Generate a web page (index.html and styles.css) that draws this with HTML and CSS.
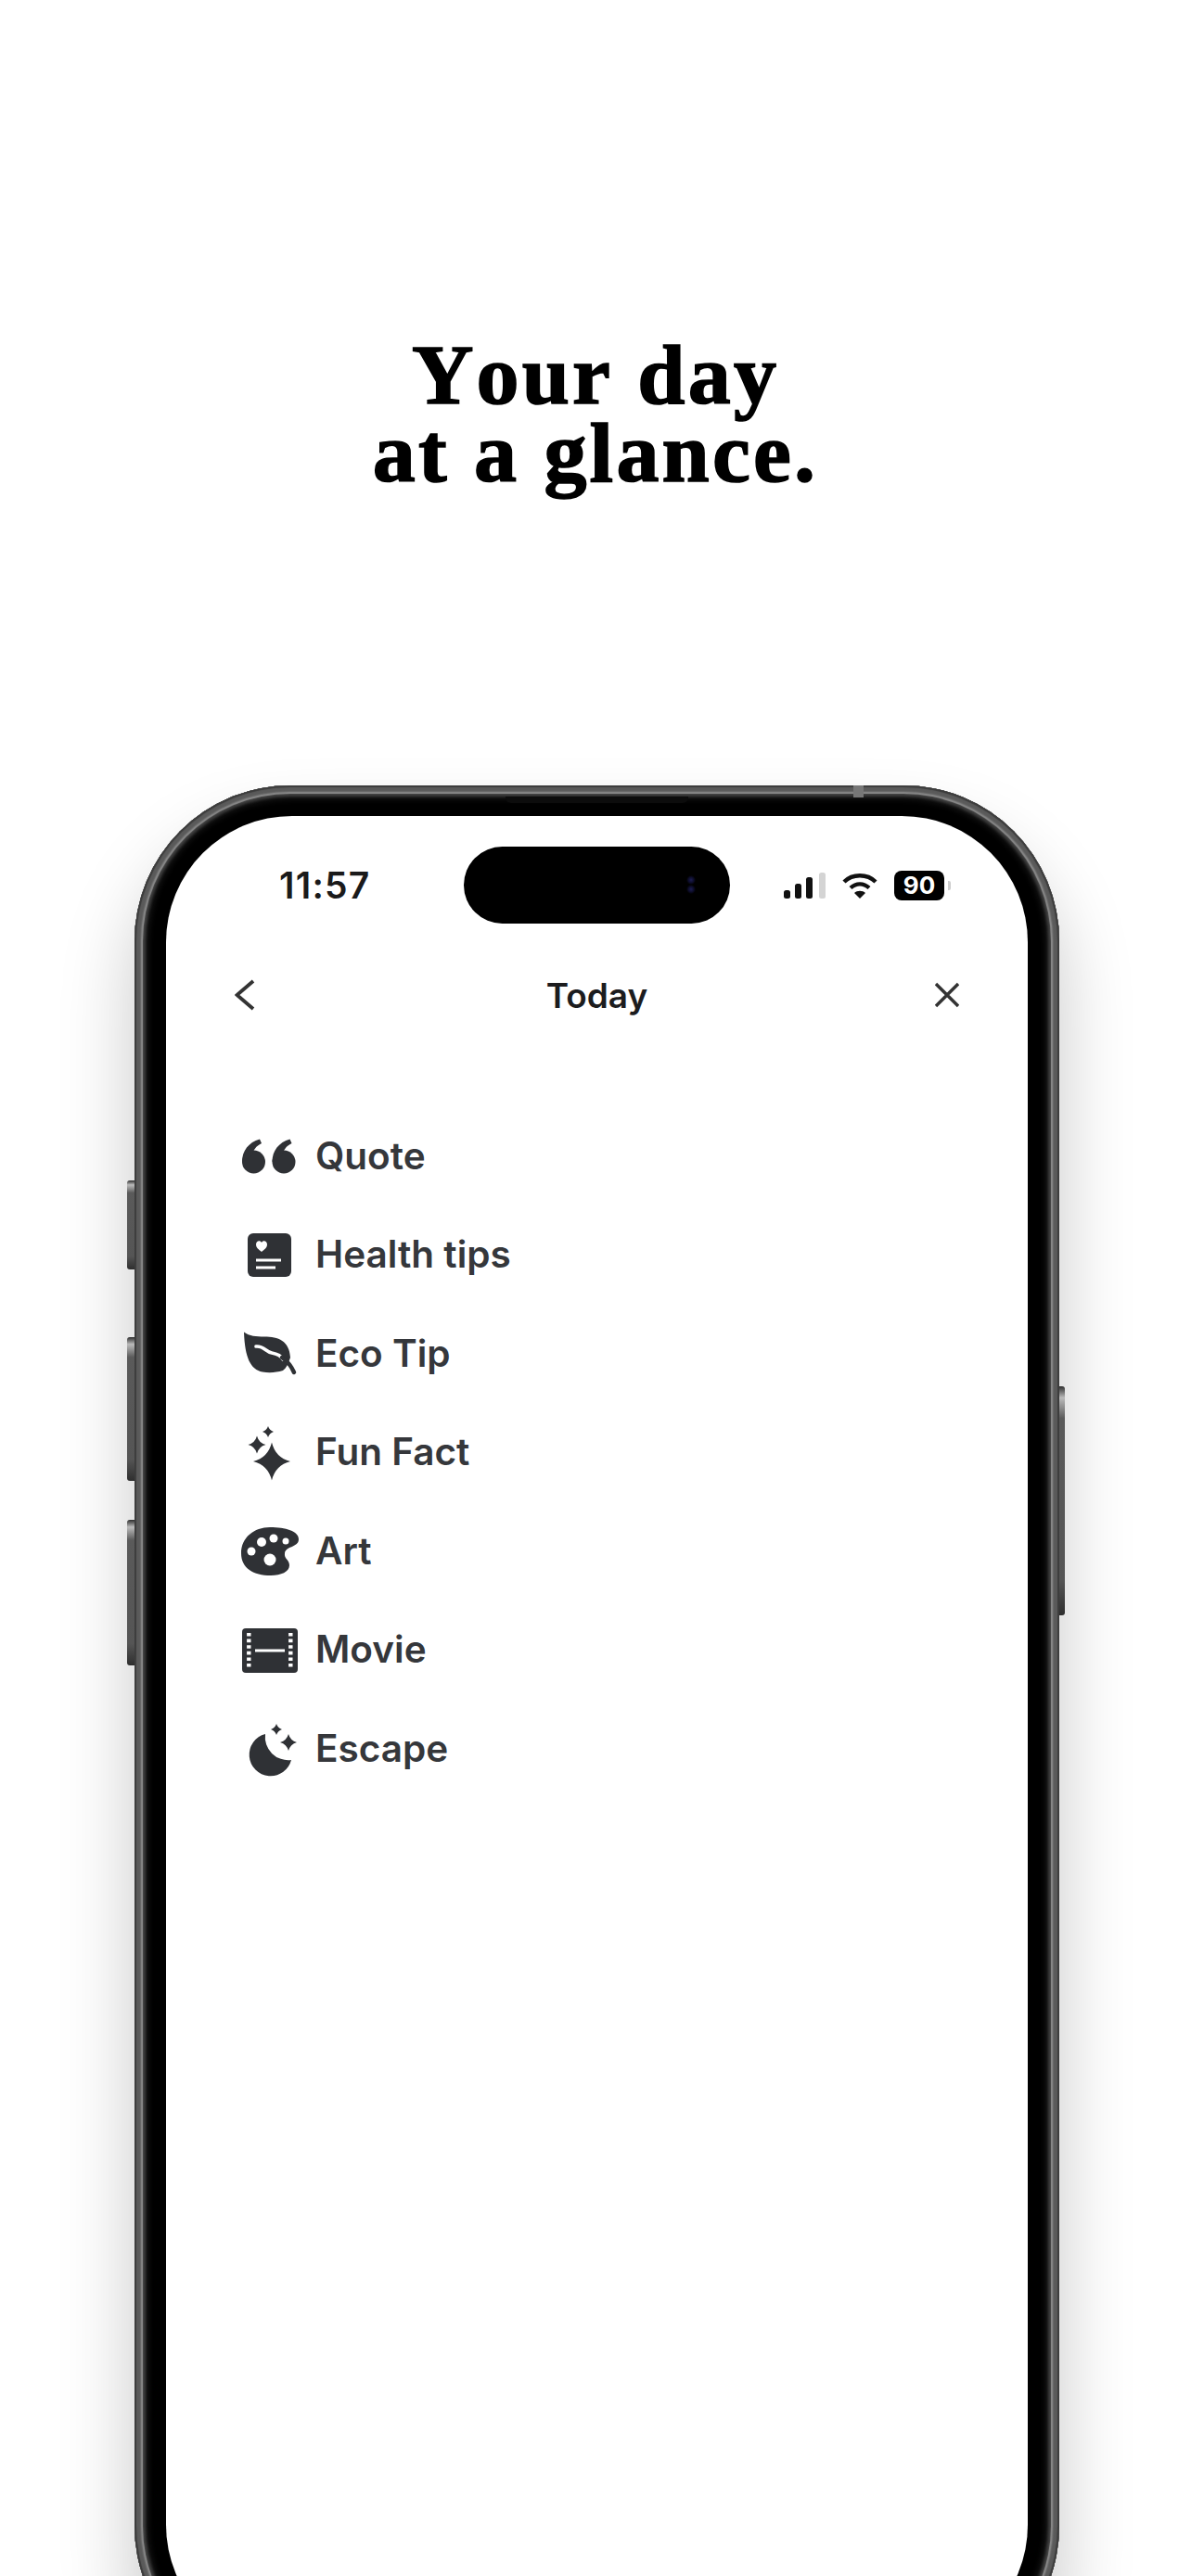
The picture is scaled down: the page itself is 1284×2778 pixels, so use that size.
FILE: index.html
```html
<!DOCTYPE html>
<html lang="en">

<head>
    <meta charset="UTF-8">
    <meta name="viewport" content="width=device-width, initial-scale=1.0">
    <title>Your day at a glance</title>
    <link rel="stylesheet" href="styles.css">
</head>

<body>
    <h1 class="headline">Your day<br>at a glance.</h1>

    <div class="phone">
        <span class="side-btn btn-action"></span>
        <span class="side-btn btn-vol-up"></span>
        <span class="side-btn btn-vol-down"></span>
        <span class="side-btn btn-power"></span>
        <span class="speaker"></span>
        <span class="seam"></span>

        <div class="screen">
            <div class="status-bar">
                <div class="status-time">11:57</div>
                <div class="island"><span class="camera"></span></div>
                <div class="status-icons">
                    <svg class="signal" width="45" height="28" viewBox="0 0 45 28">
                        <rect x="0" y="19" width="7" height="9" rx="2.5" fill="#111"/>
                        <rect x="12" y="12" width="7" height="16" rx="2.5" fill="#111"/>
                        <rect x="24" y="5" width="7" height="23" rx="2.5" fill="#111"/>
                        <rect x="38" y="0" width="7" height="28" rx="2.5" fill="#d4d4d4"/>
                    </svg>
                    <svg class="wifi" width="38" height="28" viewBox="0 0 38 28">
                        <path d="M2 10C11 1 27 1 36 10" fill="none" stroke="#111" stroke-width="4.4"/>
                        <path d="M9 16.5C15 11 23 11 29 16.5" fill="none" stroke="#111" stroke-width="4.4"/>
                        <path d="M13 22C16 19 22 19 25 22L19 28Z" fill="#111"/>
                    </svg>
                    <div class="battery">90</div>
                    <span class="battery-nub"></span>
                </div>
            </div>

            <div class="nav-bar">
                <svg width="26" height="34" viewBox="0 0 26 34">
                    <path d="M20 2L2.5 17L20 32" fill="none" stroke="#333" stroke-width="3.8"/>
                </svg>
                <div class="nav-title">Today</div>
                <svg width="26" height="34" viewBox="0 0 26 34">
                    <path d="M1 5L25 29M25 5L1 29" fill="none" stroke="#333" stroke-width="3.4"/>
                </svg>
            </div>

            <div class="topic-list">
                <div class="topic">
                    <svg class="topic-icon" viewBox="0 0 66 66">
                        <circle cx="15.5" cy="40" r="12.5"/>
                        <circle cx="48" cy="40" r="12.5"/>
                        <path d="M3 40C3 28 10 19 22 15.5L24 20C18 23 15 27 14 33Z"/>
                        <path d="M35.5 40C35.5 28 42.5 19 54.5 15.5L56.5 20C50.5 23 47.5 27 46.5 33Z"/>
                    </svg>
                    <span>Quote</span>
                </div>
                <div class="topic">
                    <svg class="topic-icon" viewBox="0 0 66 66">
                        <rect x="9" y="10" width="47" height="47" rx="6"/>
                        <path class="cut" d="M24 30C21 27.500 18 25.500 18 22C18 18 22.500 17 24 20C25.500 17 30 18 30 22C30 25.500 27 27.500 24 30Z"/>
                        <path class="cut-line" d="M18 39H45M18 47H39"/>
                    </svg>
                    <span>Health tips</span>
                </div>
                <div class="topic">
                    <svg class="topic-icon" viewBox="0 0 66 66">
                        <path d="M5 10.500C11 15 18 15.500 27 15.500C42 15.500 54 20 55 38C53 44 51 49 47 52C40 54 33 55 25 53.500C12 51 6 38 5 10.500Z"/>
                        <path class="cut-line vein" d="M18 26C26 25 29 32 35 33C41 34 45 36 47 40" stroke-linecap="round"/>
                        <path d="M46 38C52 42 56 47 59 54" fill="none" stroke="#2f3135" stroke-width="4.500" stroke-linecap="round"/>
                    </svg>
                    <span>Eco Tip</span>
                </div>
                <div class="topic">
                    <svg class="topic-icon" viewBox="0 0 66 66">
                        <path d="M35 22.500q4 16.500 20 20.500q-16 4-20 20.500q-4-16.500-20-20.500q16-4 20-20.500z"/>
                        <path d="M19 15.500q2 7.500 9.500 9.500q-7.500 2-9.500 9.500q-2-7.500-9.500-9.500q7.500-2 9.500-9.500z"/>
                        <path d="M31 5q1.500 4.500 6 6q-4.500 1.500-6 6q-1.500-4.500-6-6q4.500-1.500 6-6z"/>
                    </svg>
                    <span>Fun Fact</span>
                </div>
                <div class="topic">
                    <svg class="topic-icon" viewBox="0 0 66 66">
                        <path d="M2 36C2 19 16 8 33 8C50 8 64 12 64 21C64 30 50 28 49 36C48 42 54 43 54 49C54 56 45 60 34 60C15 60 2 52 2 36Z"/>
                        <circle class="cut" cx="24" cy="24" r="5"/>
                        <circle class="cut" cx="37" cy="20" r="4.500"/>
                        <circle class="cut" cx="50" cy="23" r="3.500"/>
                        <circle class="cut" cx="13" cy="34" r="4.500"/>
                        <circle class="cut" cx="33" cy="43" r="6.500"/>
                    </svg>
                    <span>Art</span>
                </div>
                <div class="topic">
                    <svg class="topic-icon" viewBox="0 0 66 66">
                        <rect x="3" y="10" width="60" height="48" rx="4"/>
                        <path class="cut-line" d="M17 34H49"/>
                        <path class="cut-dots" d="M10.300 15V52M55.300 15V52"/>
                    </svg>
                    <span>Movie</span>
                </div>
                <div class="topic">
                    <svg class="topic-icon" viewBox="0 0 66 66">
                        <path d="M28 18A23 23 0 1 0 56 46A25 25 0 0 1 28 18Z"/>
                        <path d="M53 18q2 7 9 9q-7 2-9 9q-2-7-9-9q7-2 9-9z"/>
                        <path d="M40 7q1.500 4.500 6 6q-4.500 1.500-6 6q-1.500-4.500-6-6q4.500-1.500 6-6z"/>
                    </svg>
                    <span>Escape</span>
                </div>
            </div>
        </div>
    </div>
</body>

</html>
```

FILE: styles.css
```css
html,
body {
    height: 2778px;
    overflow: hidden;
}

body {
    margin: 0;
    background-color: #fff;
    font-family: 'Inter', 'Liberation Sans', sans-serif;
}

.headline {
    margin: 0;
    padding-top: 362px;
    text-align: center;
    font-family: 'Liberation Serif', serif;
    font-size: 92px;
    font-weight: bold;
    font-kerning: none;
    line-height: 84px;
    letter-spacing: 3.2px;
    -webkit-text-stroke: 1.6px #000;
    color: #000;
}

.phone {
    position: relative;
    box-sizing: border-box;
    width: 997px;
    height: 2045px;
    margin: 317px 0 0 145px;
    padding: 33px 34px;
    background-color: #000;
    border-radius: 168px;
    box-shadow:
        inset 0 0 1px 2px #3c3c3c,
        inset 0 0 2px 7px #5a5a5a,
        inset 0 0 1px 9px #929292,
        inset 0 0 3px 12px #3e3e3e,
        inset 0 0 6px 15px #161616,
        0 50px 80px rgba(0, 0, 0, 0.22);
}

.side-btn {
    position: absolute;
    width: 8px;
    border-radius: 3px 0 0 3px;
    background: linear-gradient(#2e2e2e 0, #bbb 5%, #5a5a5a 14%, #555 85%, #2e2e2e 100%);
}

.btn-action {
    left: -8px;
    top: 426px;
    height: 96px;
}

.btn-vol-up {
    left: -8px;
    top: 595px;
    height: 155px;
}

.btn-vol-down {
    left: -8px;
    top: 792px;
    height: 157px;
}

.btn-power {
    left: auto;
    right: -6px;
    top: 648px;
    height: 247px;
    width: 6px;
    border-radius: 0 3px 3px 0;
}

.speaker {
    position: absolute;
    left: 400px;
    top: 12px;
    width: 197px;
    height: 7px;
    background-color: #0c0c0c;
    border-radius: 0 0 6px 6px;
}

.seam {
    position: absolute;
    left: 775px;
    top: 0;
    width: 11px;
    height: 13px;
    background-color: #777;
}

.screen {
    height: 100%;
    background-color: #fff;
    border-radius: 136px;
    overflow: hidden;
}

/* status bar */
.status-bar {
    display: grid;
    grid-template-columns: 1fr 287px 1fr;
    align-items: center;
    padding-top: 33px;
}

.status-time {
    padding-left: 122px;
    font-size: 39px;
    font-weight: 560;
    letter-spacing: 1.2px;
    color: #1a1a1a;
}

.island {
    position: relative;
    height: 83px;
    background-color: #000;
    border-radius: 42px;
}

.camera {
    position: absolute;
    right: 37px;
    top: 29px;
    width: 10px;
    height: 24px;
    background:
        radial-gradient(circle at 5px 7px, #1c1c52 0, #0c0c28 3px, transparent 5px),
        radial-gradient(circle at 5px 17px, #1c1c52 0, #0c0c28 3px, transparent 5px);
}

.status-icons {
    display: flex;
    align-items: center;
    gap: 18px;
    padding-left: 58px;
}

.battery {
    width: 54px;
    height: 32px;
    background-color: #000;
    border-radius: 8px;
    text-align: center;
    font-size: 26px;
    font-weight: 700;
    line-height: 32px;
    color: #fff;
}

.battery-nub {
    width: 3px;
    height: 10px;
    margin-left: -14px;
    background-color: #ccc;
    border-radius: 0 2px 2px 0;
}

/* nav */
.nav-bar {
    display: flex;
    justify-content: space-between;
    align-items: center;
    height: 60px;
    margin-top: 47px;
    padding: 0 74px;
}

.nav-title {
    font-size: 37px;
    font-weight: 600;
    color: #1c1c1e;
}

/* list */
.topic-list {
    margin-top: 90px;
    padding-left: 79px;
}

.topic {
    display: flex;
    align-items: center;
    gap: 16px;
    height: 106.5px;
    font-size: 40.5px;
    font-weight: 590;
    color: #35373b;
}

.topic-icon {
    width: 66px;
    height: 66px;
    fill: #2f3135;
}

.cut {
    fill: #fff;
}

.cut-line {
    fill: none;
    stroke: #fff;
    stroke-width: 3;
}

.vein {
    stroke-width: 3.6;
}

.cut-dots {
    fill: none;
    stroke: #fff;
    stroke-width: 4.4;
    stroke-dasharray: 3.600 3;
}
```
